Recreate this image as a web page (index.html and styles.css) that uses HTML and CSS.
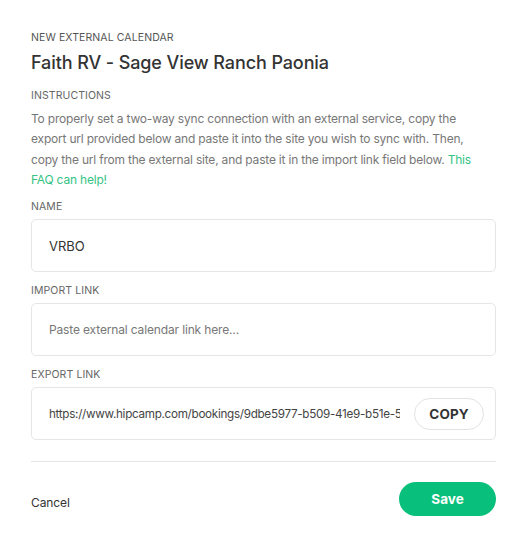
FILE: index.html
```html
<!DOCTYPE html>
<html>
<head>
<meta charset="utf-8">
<link rel="stylesheet" href="styles.css">
</head>
<body>
<div class="modal">
  <div class="eyebrow">NEW EXTERNAL CALENDAR</div>
  <h1 class="title">Faith RV - Sage View Ranch Paonia</h1>
  <div class="label label-instr">INSTRUCTIONS</div>
  <p class="instructions">To properly set a two-way sync connection with an external service, copy the export url provided below and paste it into the site you wish to sync with. Then,<br>copy the url from the external site, and paste it in the import link field below. <a class="link" href="#">This FAQ can help!</a></p>

  <div class="field">
    <div class="label">NAME</div>
    <div class="box"><span class="value">VRBO</span></div>
  </div>
  <div class="field">
    <div class="label">IMPORT LINK</div>
    <div class="box"><span class="placeholder">Paste external calendar link here...</span></div>
  </div>
  <div class="field">
    <div class="label">EXPORT LINK</div>
    <div class="box box-export"><span class="url">https://www.hipcamp.com/bookings/9dbe5977-b509-41e9-b51e-5f2a9c1d7e40/calendar.ics</span><button class="copy">COPY</button></div>
  </div>

  <div class="footer">
    <a class="cancel" href="#">Cancel</a>
    <button class="save">Save</button>
  </div>
</div>
</body>
</html>
```

FILE: styles.css
```css
* { box-sizing: border-box; }
html, body { margin: 0; padding: 0; background: #fff; }
body {
  font-family: Inter, "Helvetica Neue", Arial, sans-serif;
  color: #333;
  -webkit-font-smoothing: antialiased;
}
.modal {
  width: 465px;
  margin-left: 31px;
  padding-top: 31px;
}
.eyebrow {
  font-size: 10.5px;
  line-height: 14px;
  color: #555;
  letter-spacing: 0.1px;
}
.title {
  margin: 7px 0 0;
  font-size: 18px;
  line-height: 22px;
  font-weight: 500;
  color: #333;
  letter-spacing: -0.1px;
}
.label {
  font-size: 10.5px;
  line-height: 14px;
  color: #666;
  letter-spacing: 0.1px;
}
.label-instr { margin-top: 15px; }
.instructions {
  width: 452px;
  margin: 6px 0 0;
  font-size: 12px;
  line-height: 20.3px;
  color: #777;
  letter-spacing: -0.2px;
}
.link { color: #34c384; text-decoration: none; }
.field { margin-top: 10px; }
.field .label { margin-bottom: 5px; }
.box {
  height: 53px;
  border: 1px solid #e6e6e6;
  border-radius: 5px;
  display: flex;
  align-items: center;
  padding: 0 11px 0 17px;
}
.field + .field { margin-top: 12px; }
.value { font-size: 13px; color: #333; }
.placeholder { font-size: 12px; color: #777; letter-spacing: -0.15px; }
.url {
  flex: 1;
  min-width: 0;
  white-space: nowrap;
  overflow: hidden;
  font-size: 11.7px;
  color: #444;
  letter-spacing: -0.3px;
}
.copy {
  flex: none;
  margin-left: 14px;
  width: 70px;
  height: 32px;
  border: 1px solid #e3e3e3;
  border-radius: 16px;
  background: #fff;
  font-family: inherit;
  font-size: 13.5px;
  font-weight: 700;
  color: #333;
  letter-spacing: 0.1px;
}
.footer {
  margin-top: 21px;
  border-top: 1px solid #e5e5e5;
  padding-top: 20px;
  display: flex;
  justify-content: space-between;
  align-items: center;
}
.cancel {
  font-size: 12px;
  color: #333;
  text-decoration: none;
  margin-top: 6px;
  letter-spacing: -0.1px;
}
.save {
  width: 97px;
  height: 34px;
  border: none;
  border-radius: 17px;
  background: #08bf7b;
  color: #fff;
  font-family: inherit;
  font-size: 13.5px;
  font-weight: 700;
}
```
